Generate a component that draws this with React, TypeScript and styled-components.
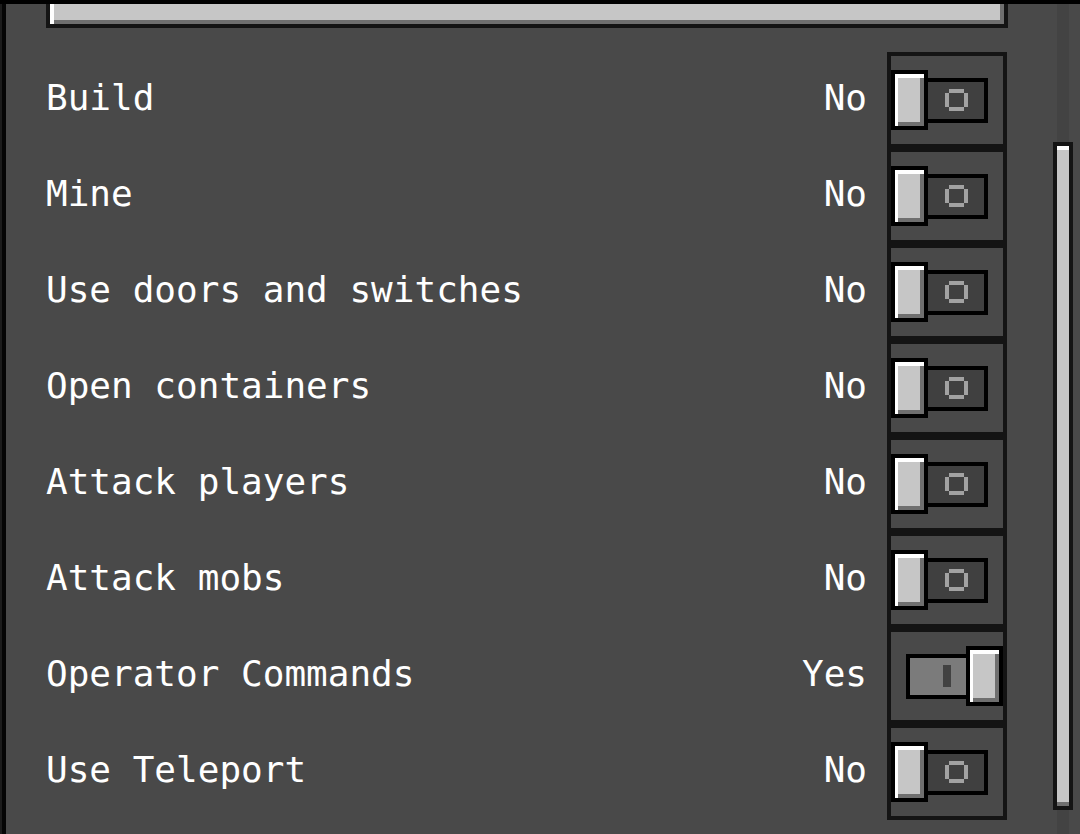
import styled, { createGlobalStyle } from "styled-components";

type Permission = { label: string; on: boolean };

const permissions: Permission[] = [
  { label: "Build", on: false },
  { label: "Mine", on: false },
  { label: "Use doors and switches", on: false },
  { label: "Open containers", on: false },
  { label: "Attack players", on: false },
  { label: "Attack mobs", on: false },
  { label: "Operator Commands", on: true },
  { label: "Use Teleport", on: false },
];

const GlobalStyle = createGlobalStyle`
  html, body {
    margin: 0;
    padding: 0;
    background: #494949;
    overflow: hidden;
  }
`;

const Frame = styled.div`
  display: flex;
  width: 1080px;
  height: 834px;
  box-sizing: border-box;
  border-top: 4px solid #000;
  background: #494949;
  overflow: hidden;
`;

const EdgeStrip = styled.div`
  flex: 0 0 6px;
  box-sizing: border-box;
  border-left: 2px solid #1c1c1c;
  background: #050505;
`;

const Content = styled.div`
  display: flex;
  flex-direction: column;
  width: 962px;
  margin-left: 40px;
  overflow: hidden;
`;

const ClippedButton = styled.div`
  flex: 0 0 48px;
  margin-top: -24px;
  box-sizing: border-box;
  border: 4px solid #141414;
  background: #c6c6c6;
  box-shadow: inset 4px 4px 0 #fff, inset -4px -4px 0 #6f6f6f;
`;

const List = styled.ul`
  list-style: none;
  margin: 24px 0 0;
  padding: 0;
`;

const Row = styled.li`
  display: flex;
  align-items: center;
  height: 96px;
  width: 961px;
`;

const Label = styled.span`
  flex: 1;
  font-family: "DejaVu Sans Mono", monospace;
  font-size: 36px;
  line-height: 36px;
  color: #fff;
  white-space: pre;
  padding-bottom: 4px;
`;

const Value = styled.span`
  margin-right: 20px;
  font-family: "DejaVu Sans Mono", monospace;
  font-size: 36px;
  line-height: 36px;
  color: #fff;
  padding-bottom: 4px;
`;

const Cell = styled.div<{ $on: boolean }>`
  display: flex;
  align-items: center;
  justify-content: ${({ $on }) => ($on ? "flex-end" : "flex-start")};
  width: 120px;
  height: 96px;
  box-sizing: border-box;
  border: 4px solid #141414;
`;

const Knob = styled.div`
  position: relative;
  z-index: 1;
  flex: 0 0 37px;
  height: 60px;
  box-sizing: border-box;
  border: 4px solid #000;
  background: #c6c6c6;
  box-shadow: inset 3px 4px 0 #fff, inset -4px -4px 0 #6f6f6f;
`;

const Track = styled.div<{ $on: boolean }>`
  display: flex;
  align-items: center;
  justify-content: center;
  flex: 0 0 64px;
  height: 45px;
  box-sizing: border-box;
  border: 4px solid #000;
  background: ${({ $on }) => ($on ? "#7b7b7b" : "#404040")};
  margin-left: ${({ $on }) => ($on ? "0" : "-4px")};
  margin-right: ${({ $on }) => ($on ? "-4px" : "0")};
  padding-left: ${({ $on }) => ($on ? "18px" : "0")};
`;

const OnMark = styled.div`
  width: 8px;
  height: 22px;
  background: #424242;
`;

const OffMark = () => (
  <svg width="23" height="22" viewBox="0 0 23 22" shapeRendering="crispEdges">
    <g fill="#a2a2a2">
      <rect x="4" y="0" width="15" height="4" />
      <rect x="4" y="18" width="15" height="4" />
      <rect x="0" y="4" width="4" height="14" />
      <rect x="19" y="4" width="4" height="14" />
    </g>
  </svg>
);

const ScrollColumn = styled.div`
  flex: 0 0 20px;
  margin-left: 45px;
  padding-top: 138px;
  background: linear-gradient(
    to right,
    transparent 4px,
    #434343 4px,
    #434343 16px,
    transparent 16px
  );
`;

const Thumb = styled.div`
  height: 668px;
  box-sizing: border-box;
  border: 4px solid #141414;
  background: #c6c6c6;
  box-shadow: inset 0 4px 0 #fff, inset 0 -4px 0 #6f6f6f;
`;

const Toggle = ({ on }: { on: boolean }) =>
  on ? (
    <>
      <Track $on>
        <OnMark />
      </Track>
      <Knob />
    </>
  ) : (
    <>
      <Knob />
      <Track $on={false}>
        <OffMark />
      </Track>
    </>
  );

const App = () => (
  <>
    <GlobalStyle />
    <Frame>
      <EdgeStrip />
      <Content>
        <ClippedButton />
        <List>
          {permissions.map(({ label, on }) => (
            <Row key={label}>
              <Label>{label}</Label>
              <Value>{on ? "Yes" : "No"}</Value>
              <Cell $on={on}>
                <Toggle on={on} />
              </Cell>
            </Row>
          ))}
        </List>
      </Content>
      <ScrollColumn>
        <Thumb />
      </ScrollColumn>
    </Frame>
  </>
);

export default App;
